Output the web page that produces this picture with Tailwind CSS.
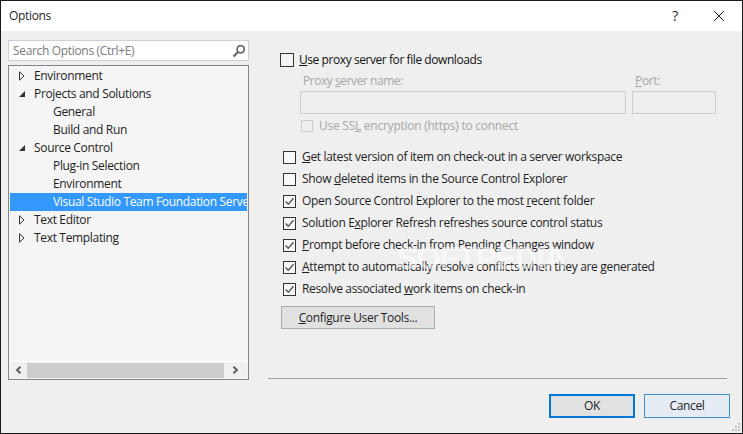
<!DOCTYPE html>
<html lang="en">
  <head>
    <meta charset="UTF-8" />
    <title>Options</title>
    <script src="https://cdn.jsdelivr.net/npm/@tailwindcss/browser@4"></script>
  </head>
  <body class="w-[743px] h-[434px] overflow-hidden bg-[#efefef]">
    <div class="relative flex flex-col w-[743px] h-[434px] border border-[#1a1a1a] font-['Open_Sans',sans-serif] text-[12px] leading-[18px] text-[#1e1e1e] tracking-[-0.33px]">
      <!-- title bar -->
      <div class="flex items-center h-[30px] bg-white pl-[8px] shrink-0">
        <span class="flex-1">Options</span>
        <span class="w-[14px] text-center text-[14px] mr-[31px]">?</span>
        <svg class="w-[12px] h-[12px] mr-[17px]" viewBox="0 0 12 12" fill="none" stroke="#1e1e1e" stroke-width="1"><path d="M1 1l10 10M11 1L1 11" /></svg>
      </div>

      <div class="flex flex-1 min-h-0">
        <!-- left column -->
        <div class="flex flex-col w-[241px] ml-[7px] pt-[9px] shrink-0">
          <div class="flex items-center justify-between h-[21px] bg-white border border-[#cfd0dc] pl-[4px] pr-[2px] text-[#7a7a7a]">
            <span>Search Options (Ctrl+E)</span>
            <svg class="w-[14px] h-[14px]" viewBox="0 0 14 14" fill="none"><circle cx="8.7" cy="5.3" r="3.6" stroke="#6b6b6b" stroke-width="1.8" /><path d="M6 8L1.5 12.5" stroke="#6b6b6b" stroke-width="2.4" /></svg>
          </div>
          <div class="flex flex-col h-[315px] mt-[4px] border border-[#828790] bg-[#f5f5f5] p-[1px] overflow-hidden">
            <div class="flex-1 min-h-0 whitespace-nowrap">
              <div class="flex items-center h-[18px] pl-[9px]">
                <svg class="w-[6px] h-[10px] mr-[9px]" viewBox="0 0 6 10" fill="none" stroke="#333"><path d="M.5.8L5 5 .5 9.2z" /></svg>
                <span>Environment</span>
              </div>
              <div class="flex items-center h-[18px] pl-[9px]">
                <svg class="w-[6px] h-[10px] mr-[9px]" viewBox="0 0 6 10" fill="#333"><path d="M6 2v6H0z" /></svg>
                <span>Projects and Solutions</span>
              </div>
              <div class="h-[18px] pl-[43px]">General</div>
              <div class="h-[18px] pl-[43px]">Build and Run</div>
              <div class="flex items-center h-[18px] pl-[9px]">
                <svg class="w-[6px] h-[10px] mr-[9px]" viewBox="0 0 6 10" fill="#333"><path d="M6 2v6H0z" /></svg>
                <span>Source Control</span>
              </div>
              <div class="h-[18px] pl-[43px]">Plug-in Selection</div>
              <div class="h-[18px] pl-[43px]">Environment</div>
              <div class="h-[18px] pl-[43px] bg-[#3399ff] text-white overflow-hidden">Visual Studio Team Foundation Server</div>
              <div class="flex items-center h-[18px] pl-[9px]">
                <svg class="w-[6px] h-[10px] mr-[9px]" viewBox="0 0 6 10" fill="none" stroke="#333"><path d="M.5.8L5 5 .5 9.2z" /></svg>
                <span>Text Editor</span>
              </div>
              <div class="flex items-center h-[18px] pl-[9px]">
                <svg class="w-[6px] h-[10px] mr-[9px]" viewBox="0 0 6 10" fill="none" stroke="#333"><path d="M.5.8L5 5 .5 9.2z" /></svg>
                <span>Text Templating</span>
              </div>
            </div>
            <!-- horizontal scrollbar -->
            <div class="flex items-center h-[17px] border-t border-white bg-[#f0f0f0] shrink-0">
              <div class="flex justify-center w-[17px] shrink-0">
                <svg class="w-[7px] h-[8px]" viewBox="0 0 7 8" fill="none" stroke="#606060" stroke-width="2"><path d="M5.5 .7L2 4l3.5 3.3" /></svg>
              </div>
              <div class="flex-1 h-[15px] bg-[#cdcdcd]"></div>
              <div class="flex justify-center w-[23px] shrink-0">
                <svg class="w-[7px] h-[8px]" viewBox="0 0 7 8" fill="none" stroke="#606060" stroke-width="2"><path d="M1.5 .7L5 4 1.5 7.3" /></svg>
              </div>
            </div>
          </div>
        </div>

        <!-- right column -->
        <div class="flex flex-col flex-1 min-w-0 ml-[19px] pt-[20px]">
          <div class="flex items-center h-[18px] ml-[12px]">
            <span class="w-[14px] h-[14px] border border-[#333] bg-[#f4f4f4] mr-[5px]"></span>
            <span class="text-[#111] tracking-[-0.43px]"><u>U</u>se proxy server for file downloads</span>
          </div>
          <div class="flex gap-[6px] ml-[32px] mt-[3px] text-[#a6a6a6]">
            <div class="w-[326px]">
              <div class="pl-[3px] h-[18px] tracking-[-0.45px]">Proxy <u>s</u>erver name:</div>
              <div class="h-[23px] mt-[1px] border border-[#cccccc]"></div>
            </div>
            <div class="w-[84px]">
              <div class="pl-[3px] h-[18px]"><u>P</u>ort:</div>
              <div class="h-[23px] mt-[1px] border border-[#cccccc]"></div>
            </div>
          </div>
          <div class="flex items-center h-[18px] ml-[33px] mt-[3px] text-[#a6a6a6]">
            <span class="w-[12px] h-[12px] border border-[#cccccc] mr-[6px]"></span>
            <span class="tracking-[-0.25px]">Use SS<u>L</u> encryption (https) to connect</span>
          </div>

          <div class="flex flex-col gap-[4px] ml-[15px] mt-[13px]">
            <div class="flex items-center h-[18px]">
              <span class="w-[13px] h-[13px] border border-[#333] bg-[#f8f8f8] mr-[6px]"></span>
              <span><u>G</u>et latest version of item on check-out in a server workspace</span>
            </div>
            <div class="flex items-center h-[18px]">
              <span class="w-[13px] h-[13px] border border-[#333] bg-[#f8f8f8] mr-[6px]"></span>
              <span>Show <u>d</u>eleted items in the Source Control Explorer</span>
            </div>
            <div class="flex items-center h-[18px]">
              <svg class="w-[13px] h-[13px] mr-[6px] border border-[#333] bg-[#f8f8f8]" viewBox="0 0 11 11" fill="none" stroke="#555" stroke-width="1.4"><path d="M1.5 5.5l2.8 2.8 5.2-6" /></svg>
              <span>Open Source Control Explorer to the most <u>r</u>ecent folder</span>
            </div>
            <div class="flex items-center h-[18px]">
              <svg class="w-[13px] h-[13px] mr-[6px] border border-[#333] bg-[#f8f8f8]" viewBox="0 0 11 11" fill="none" stroke="#555" stroke-width="1.4"><path d="M1.5 5.5l2.8 2.8 5.2-6" /></svg>
              <span>Solution E<u>x</u>plorer Refresh refreshes source control status</span>
            </div>
            <div class="flex items-center h-[18px]">
              <svg class="w-[13px] h-[13px] mr-[6px] border border-[#333] bg-[#f8f8f8]" viewBox="0 0 11 11" fill="none" stroke="#555" stroke-width="1.4"><path d="M1.5 5.5l2.8 2.8 5.2-6" /></svg>
              <span><u>P</u>rompt before check-in from Pending Changes window</span>
            </div>
            <div class="flex items-center h-[18px]">
              <svg class="w-[13px] h-[13px] mr-[6px] border border-[#333] bg-[#f8f8f8]" viewBox="0 0 11 11" fill="none" stroke="#555" stroke-width="1.4"><path d="M1.5 5.5l2.8 2.8 5.2-6" /></svg>
              <span><u>A</u>ttempt to automatically resolve conflicts when they are generated</span>
            </div>
            <div class="flex items-center h-[18px]">
              <svg class="w-[13px] h-[13px] mr-[6px] border border-[#333] bg-[#f8f8f8]" viewBox="0 0 11 11" fill="none" stroke="#555" stroke-width="1.4"><path d="M1.5 5.5l2.8 2.8 5.2-6" /></svg>
              <span>Resolve associated <u>w</u>ork items on check-in</span>
            </div>
          </div>

          <button class="w-[154px] h-[23px] ml-[13px] mt-[8px] border border-[#adadad] bg-[#e1e1e1] text-center"><u>C</u>onfigure User Tools...</button>

          <div class="mt-[49px] mr-[15px] border-t border-[#a0a0a0]"></div>

          <div class="flex justify-end gap-[9px] mt-[15px] mr-[12px]">
            <button class="w-[86px] h-[24px] border-2 border-[#0078d7] bg-[#e1e1e1]">OK</button>
            <button class="w-[86px] h-[24px] border border-[#3f8fcf] bg-[#e5ecf4]">Cancel</button>
          </div>
        </div>
      </div>

      <!-- faint watermark over the panel -->
      <div class="absolute left-[396px] top-[240px] font-['Liberation_Sans',sans-serif] font-bold text-[31px] leading-[36px] tracking-[-1px] text-white/50 pointer-events-none">SOFTPEDIA</div>

      <!-- resize grip -->
      <svg class="absolute right-[1px] bottom-[1px] w-[10px] h-[10px]" viewBox="0 0 10 10" fill="#c4c4c4">
        <rect x="7" y="1" width="2" height="2" />
        <rect x="4" y="4" width="2" height="2" />
        <rect x="7" y="4" width="2" height="2" />
        <rect x="1" y="7" width="2" height="2" />
        <rect x="4" y="7" width="2" height="2" />
        <rect x="7" y="7" width="2" height="2" />
      </svg>
    </div>
  </body>
</html>
